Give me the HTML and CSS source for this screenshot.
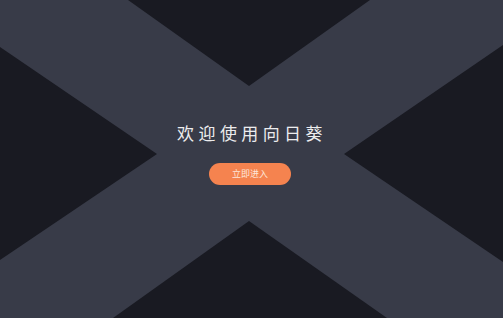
FILE: index.html
```html
<!DOCTYPE html>
<html lang="zh-CN">
<head>
  <meta charset="UTF-8" />
  <meta name="viewport" content="width=device-width, initial-scale=1.0"/>
  <title>欢迎使用向日葵</title>
  <link rel="stylesheet" href="styles.css">
</head>
<body>

  <div class="welcome">
    <svg class="backdrop" viewBox="0 0 503 318" preserveAspectRatio="none">
      <rect width="503" height="318" fill="#383b48"/>
      <polygon points="128,0 370,0 249,86" fill="#191a22"/>
      <polygon points="0,47 157,154 0,260" fill="#191a22"/>
      <polygon points="503,45 344,154 503,262" fill="#191a22"/>
      <polygon points="113,318 249,221 387,318" fill="#191a22"/>
    </svg>

    <div class="content">
      <h1 class="title">欢迎使用向日葵</h1>
      <button class="enter">立即进入</button>
    </div>
  </div>

</body>
</html>
```

FILE: styles.css
```css
html, body {
  margin: 0;
  padding: 0;
  height: 100%;
  background: #191a22;
  overflow: hidden;
}
.welcome {
  position: relative;
  width: 503px;
  height: 318px;
  font-family: "Noto Sans CJK SC", "Noto Sans", sans-serif;
}
.backdrop {
  position: absolute;
  left: 0;
  top: 0;
  width: 100%;
  height: 100%;
}
.content {
  position: relative;
  display: flex;
  flex-direction: column;
  align-items: center;
  padding: 122px 3px 0 0;
}
.title {
  margin: 0 0 0 4px;
  font-size: 17px;
  line-height: 22px;
  font-weight: 400;
  letter-spacing: 4.4px;
  color: #ececee;
}
.enter {
  margin-top: 19px;
  width: 82px;
  height: 22px;
  padding: 0;
  border: none;
  border-radius: 11px;
  background: #f5834f;
  color: #fde6da;
  font-family: inherit;
  font-size: 9px;
  line-height: 22px;
  cursor: pointer;
}
.enter:hover {
  background: #f77a40;
}
```
